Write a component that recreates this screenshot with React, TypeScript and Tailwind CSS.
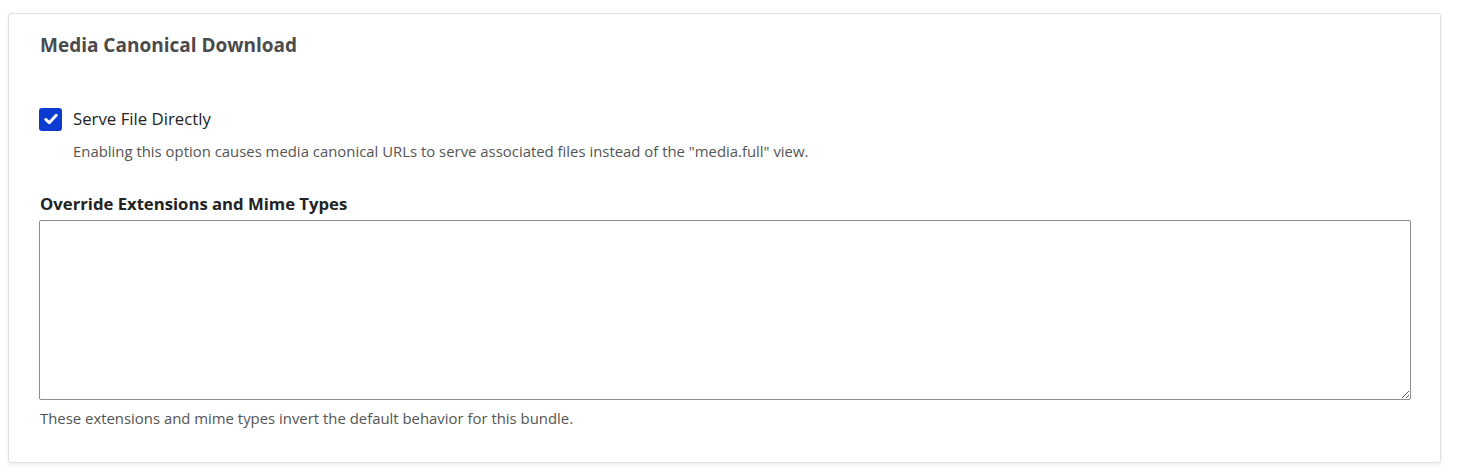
import React from 'react'

const App = () => {
  return (
    <main className="min-h-[474px] bg-white px-2 pt-[13px] font-['Open_Sans',sans-serif]">
      <section className="h-[450px] w-[1433px] rounded-[3px] border border-[#e0e0e0] bg-white px-[31px] pt-[19px] shadow-[0_2px_4px_rgba(0,0,0,0.08)]">
        <h2 className="text-[19px] leading-[24px] font-bold text-[#4b4b4b]">
          Media Canonical Download
        </h2>

        <div className="mt-[50px]">
          <label className="flex items-center gap-[11px]">
            <span className="-ml-px flex h-[23px] w-[23px] items-center justify-center rounded-[3px] bg-[#0b3bd0]">
              <svg width="16" height="16" viewBox="0 0 14 14" fill="none">
                <path d="M2.4 7.4 L5.5 10.3 L11.6 3.8" stroke="white" strokeWidth="2.6" strokeLinecap="round" strokeLinejoin="round" />
              </svg>
            </span>
            <span className="text-[16.8px] leading-[24px] text-[#232323]">Serve File Directly</span>
          </label>
          <p className="mt-[10px] pl-[33px] text-[14.9px] leading-[20px] text-[#555]">
            Enabling this option causes media canonical URLs to serve associated files instead of the "media.full" view.
          </p>
        </div>

        <div className="mt-[32px]">
          <label className="block text-[16.7px] leading-[22px] font-bold text-[#232323]">
            Override Extensions and Mime Types
          </label>
          <textarea className="mt-[5px] -ml-px block h-[180px] w-[1372px] rounded-[2px] border border-[#8d8d8d] bg-white" />
          <p className="mt-[8px] text-[14.9px] leading-[20px] text-[#555]">
            These extensions and mime types invert the default behavior for this bundle.
          </p>
        </div>
      </section>
    </main>
  )
}

export default App
